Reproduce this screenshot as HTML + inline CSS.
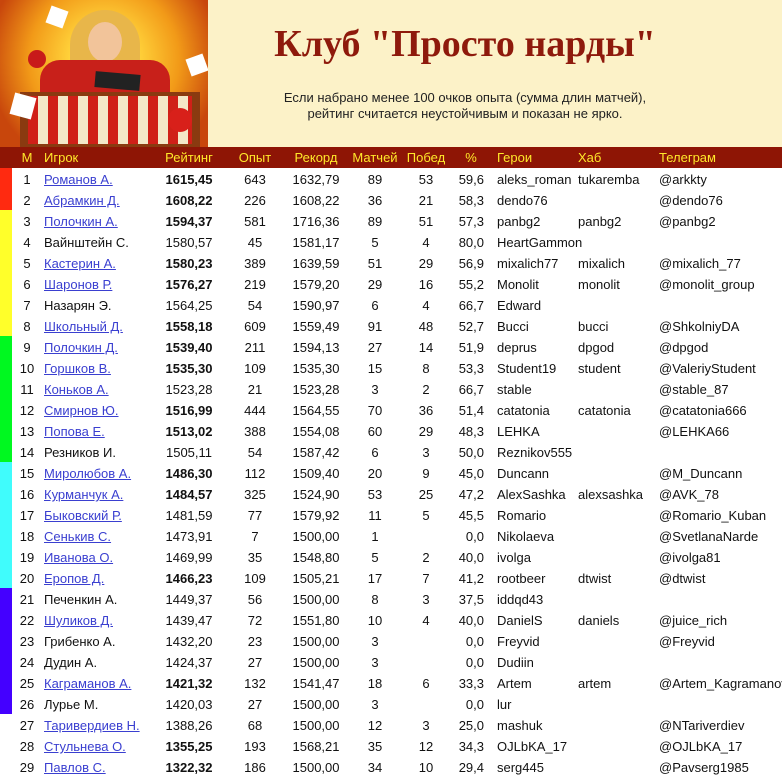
<!DOCTYPE html>
<html><head><meta charset="utf-8"><style>
body{margin:0;width:782px;height:779px;overflow:hidden;background:#fff;font-family:"Liberation Sans",Arial,sans-serif;font-size:13px;color:#111;position:relative}
.top{position:absolute;left:0;top:0;width:782px;height:147px;background:#fcf2c8}
.img{position:absolute;left:0;top:0;width:208px;height:147px;overflow:hidden;background:radial-gradient(circle at 50% 40%,#fff6a0 0,#ffd23a 25%,#f29a18 55%,#c8460c 85%)}
h1{position:absolute;left:220px;width:490px;top:22px;margin:0;text-align:center;font-family:"Liberation Serif",serif;font-weight:bold;font-size:38px;color:#8e1a0c}
.sub{position:absolute;left:220px;width:490px;top:90px;text-align:center;font-size:13px;line-height:16px;color:#222}
.hdr{position:absolute;left:0;top:147px;width:782px;height:21px;background:#8e1505;color:#ffe82a}
.r{position:absolute;left:0;width:782px;height:21px;line-height:21px}
.hdr span,.r span{position:absolute;line-height:21px;white-space:nowrap}
.r span{top:1px}
.hdr span{line-height:22px}
.m{left:7px;width:40px;text-align:center}
.n{left:44px}
.rt{left:139px;width:100px;text-align:center}
.o{left:225px;width:60px;text-align:center}
.rc{left:276px;width:80px;text-align:center}
.mt{left:345px;width:60px;text-align:center}
.w{left:401px;width:50px;text-align:center}
.p{left:440px;width:44px;text-align:right}
.hdr .p{left:451px;width:40px;text-align:center}
.h{left:497px}.x{left:578px}.t{left:659px}
a{color:#3a3fd0;text-decoration:underline}
b{font-weight:bold}
.s{position:absolute;left:0;width:12px}
</style></head><body>
<div class="top"></div>
<div class="img">
<div style="position:absolute;left:70px;top:10px;width:70px;height:80px;border-radius:40px 40px 20px 20px;background:#e8b64a"></div>
<div style="position:absolute;left:88px;top:22px;width:34px;height:40px;border-radius:50%;background:#f2c49a"></div>
<div style="position:absolute;left:40px;top:60px;width:130px;height:40px;border-radius:20px 20px 0 0;background:#c8201a"></div>
<div style="position:absolute;left:95px;top:73px;width:45px;height:16px;background:#222;transform:rotate(5deg)"></div>
<div style="position:absolute;left:20px;top:92px;width:180px;height:55px;background:#8a3a10"></div>
<div style="position:absolute;left:28px;top:96px;width:164px;height:48px;background:repeating-linear-gradient(90deg,#d02018 0 10px,#f4e8c8 10px 20px)"></div>
<div style="position:absolute;left:12px;top:95px;width:22px;height:22px;background:#fff;transform:rotate(15deg)"></div>
<div style="position:absolute;left:48px;top:8px;width:18px;height:18px;background:#fff;transform:rotate(20deg)"></div>
<div style="position:absolute;left:188px;top:56px;width:18px;height:18px;background:#fff;transform:rotate(-20deg)"></div>
<div style="position:absolute;left:168px;top:108px;width:24px;height:24px;border-radius:50%;background:#d8201a"></div>
<div style="position:absolute;left:28px;top:50px;width:18px;height:18px;border-radius:50%;background:#c81a1a"></div>
</div>
<h1>Клуб "Просто нарды"</h1>
<div class="sub">Если набрано менее 100 очков опыта (сумма длин матчей),<br>рейтинг считается неустойчивым и показан не ярко.</div>
<div class="hdr"><span class="m">М</span><span class="n">Игрок</span><span class="rt">Рейтинг</span><span class="o">Опыт</span><span class="rc">Рекорд</span><span class="mt">Матчей</span><span class="w">Побед</span><span class="p">%</span><span class="h">Герои</span><span class="x">Хаб</span><span class="t">Телеграм</span></div>
<div class="s" style="top:168px;height:42px;background:#ff2a10"></div>
<div class="s" style="top:210px;height:126px;background:#ffff2a"></div>
<div class="s" style="top:336px;height:126px;background:#00f820"></div>
<div class="s" style="top:462px;height:126px;background:#40fcfc"></div>
<div class="s" style="top:588px;height:126px;background:#4400ff"></div>

<div class="r" style="top:168px"><span class="m">1</span><span class="n"><a>Романов А.</a></span><span class="rt"><b>1615,45</b></span><span class="o">643</span><span class="rc">1632,79</span><span class="mt">89</span><span class="w">53</span><span class="p">59,6</span><span class="h">aleks_roman</span><span class="x">tukaremba</span><span class="t">@arkkty</span></div>
<div class="r" style="top:189px"><span class="m">2</span><span class="n"><a>Абрамкин Д.</a></span><span class="rt"><b>1608,22</b></span><span class="o">226</span><span class="rc">1608,22</span><span class="mt">36</span><span class="w">21</span><span class="p">58,3</span><span class="h">dendo76</span><span class="t">@dendo76</span></div>
<div class="r" style="top:210px"><span class="m">3</span><span class="n"><a>Полочкин А.</a></span><span class="rt"><b>1594,37</b></span><span class="o">581</span><span class="rc">1716,36</span><span class="mt">89</span><span class="w">51</span><span class="p">57,3</span><span class="h">panbg2</span><span class="x">panbg2</span><span class="t">@panbg2</span></div>
<div class="r" style="top:231px"><span class="m">4</span><span class="n">Вайнштейн С.</span><span class="rt">1580,57</span><span class="o">45</span><span class="rc">1581,17</span><span class="mt">5</span><span class="w">4</span><span class="p">80,0</span><span class="h">HeartGammon</span></div>
<div class="r" style="top:252px"><span class="m">5</span><span class="n"><a>Кастерин А.</a></span><span class="rt"><b>1580,23</b></span><span class="o">389</span><span class="rc">1639,59</span><span class="mt">51</span><span class="w">29</span><span class="p">56,9</span><span class="h">mixalich77</span><span class="x">mixalich</span><span class="t">@mixalich_77</span></div>
<div class="r" style="top:273px"><span class="m">6</span><span class="n"><a>Шаронов Р.</a></span><span class="rt"><b>1576,27</b></span><span class="o">219</span><span class="rc">1579,20</span><span class="mt">29</span><span class="w">16</span><span class="p">55,2</span><span class="h">Monolit</span><span class="x">monolit</span><span class="t">@monolit_group</span></div>
<div class="r" style="top:294px"><span class="m">7</span><span class="n">Назарян Э.</span><span class="rt">1564,25</span><span class="o">54</span><span class="rc">1590,97</span><span class="mt">6</span><span class="w">4</span><span class="p">66,7</span><span class="h">Edward</span></div>
<div class="r" style="top:315px"><span class="m">8</span><span class="n"><a>Школьный Д.</a></span><span class="rt"><b>1558,18</b></span><span class="o">609</span><span class="rc">1559,49</span><span class="mt">91</span><span class="w">48</span><span class="p">52,7</span><span class="h">Bucci</span><span class="x">bucci</span><span class="t">@ShkolniyDA</span></div>
<div class="r" style="top:336px"><span class="m">9</span><span class="n"><a>Полочкин Д.</a></span><span class="rt"><b>1539,40</b></span><span class="o">211</span><span class="rc">1594,13</span><span class="mt">27</span><span class="w">14</span><span class="p">51,9</span><span class="h">deprus</span><span class="x">dpgod</span><span class="t">@dpgod</span></div>
<div class="r" style="top:357px"><span class="m">10</span><span class="n"><a>Горшков В.</a></span><span class="rt"><b>1535,30</b></span><span class="o">109</span><span class="rc">1535,30</span><span class="mt">15</span><span class="w">8</span><span class="p">53,3</span><span class="h">Student19</span><span class="x">student</span><span class="t">@ValeriyStudent</span></div>
<div class="r" style="top:378px"><span class="m">11</span><span class="n"><a>Коньков А.</a></span><span class="rt">1523,28</span><span class="o">21</span><span class="rc">1523,28</span><span class="mt">3</span><span class="w">2</span><span class="p">66,7</span><span class="h">stable</span><span class="t">@stable_87</span></div>
<div class="r" style="top:399px"><span class="m">12</span><span class="n"><a>Смирнов Ю.</a></span><span class="rt"><b>1516,99</b></span><span class="o">444</span><span class="rc">1564,55</span><span class="mt">70</span><span class="w">36</span><span class="p">51,4</span><span class="h">catatonia</span><span class="x">catatonia</span><span class="t">@catatonia666</span></div>
<div class="r" style="top:420px"><span class="m">13</span><span class="n"><a>Попова Е.</a></span><span class="rt"><b>1513,02</b></span><span class="o">388</span><span class="rc">1554,08</span><span class="mt">60</span><span class="w">29</span><span class="p">48,3</span><span class="h">LEHKA</span><span class="t">@LEHKA66</span></div>
<div class="r" style="top:441px"><span class="m">14</span><span class="n">Резников И.</span><span class="rt">1505,11</span><span class="o">54</span><span class="rc">1587,42</span><span class="mt">6</span><span class="w">3</span><span class="p">50,0</span><span class="h">Reznikov555</span></div>
<div class="r" style="top:462px"><span class="m">15</span><span class="n"><a>Миролюбов А.</a></span><span class="rt"><b>1486,30</b></span><span class="o">112</span><span class="rc">1509,40</span><span class="mt">20</span><span class="w">9</span><span class="p">45,0</span><span class="h">Duncann</span><span class="t">@M_Duncann</span></div>
<div class="r" style="top:483px"><span class="m">16</span><span class="n"><a>Курманчук А.</a></span><span class="rt"><b>1484,57</b></span><span class="o">325</span><span class="rc">1524,90</span><span class="mt">53</span><span class="w">25</span><span class="p">47,2</span><span class="h">AlexSashka</span><span class="x">alexsashka</span><span class="t">@AVK_78</span></div>
<div class="r" style="top:504px"><span class="m">17</span><span class="n"><a>Быковский Р.</a></span><span class="rt">1481,59</span><span class="o">77</span><span class="rc">1579,92</span><span class="mt">11</span><span class="w">5</span><span class="p">45,5</span><span class="h">Romario</span><span class="t">@Romario_Kuban</span></div>
<div class="r" style="top:525px"><span class="m">18</span><span class="n"><a>Сенькив С.</a></span><span class="rt">1473,91</span><span class="o">7</span><span class="rc">1500,00</span><span class="mt">1</span><span class="p">0,0</span><span class="h">Nikolaeva</span><span class="t">@SvetlanaNarde</span></div>
<div class="r" style="top:546px"><span class="m">19</span><span class="n"><a>Иванова О.</a></span><span class="rt">1469,99</span><span class="o">35</span><span class="rc">1548,80</span><span class="mt">5</span><span class="w">2</span><span class="p">40,0</span><span class="h">ivolga</span><span class="t">@ivolga81</span></div>
<div class="r" style="top:567px"><span class="m">20</span><span class="n"><a>Еропов Д.</a></span><span class="rt"><b>1466,23</b></span><span class="o">109</span><span class="rc">1505,21</span><span class="mt">17</span><span class="w">7</span><span class="p">41,2</span><span class="h">rootbeer</span><span class="x">dtwist</span><span class="t">@dtwist</span></div>
<div class="r" style="top:588px"><span class="m">21</span><span class="n">Печенкин А.</span><span class="rt">1449,37</span><span class="o">56</span><span class="rc">1500,00</span><span class="mt">8</span><span class="w">3</span><span class="p">37,5</span><span class="h">iddqd43</span></div>
<div class="r" style="top:609px"><span class="m">22</span><span class="n"><a>Шуликов Д.</a></span><span class="rt">1439,47</span><span class="o">72</span><span class="rc">1551,80</span><span class="mt">10</span><span class="w">4</span><span class="p">40,0</span><span class="h">DanielS</span><span class="x">daniels</span><span class="t">@juice_rich</span></div>
<div class="r" style="top:630px"><span class="m">23</span><span class="n">Грибенко А.</span><span class="rt">1432,20</span><span class="o">23</span><span class="rc">1500,00</span><span class="mt">3</span><span class="p">0,0</span><span class="h">Freyvid</span><span class="t">@Freyvid</span></div>
<div class="r" style="top:651px"><span class="m">24</span><span class="n">Дудин А.</span><span class="rt">1424,37</span><span class="o">27</span><span class="rc">1500,00</span><span class="mt">3</span><span class="p">0,0</span><span class="h">Dudiin</span></div>
<div class="r" style="top:672px"><span class="m">25</span><span class="n"><a>Каграманов А.</a></span><span class="rt"><b>1421,32</b></span><span class="o">132</span><span class="rc">1541,47</span><span class="mt">18</span><span class="w">6</span><span class="p">33,3</span><span class="h">Artem</span><span class="x">artem</span><span class="t">@Artem_Kagramanov</span></div>
<div class="r" style="top:693px"><span class="m">26</span><span class="n">Лурье М.</span><span class="rt">1420,03</span><span class="o">27</span><span class="rc">1500,00</span><span class="mt">3</span><span class="p">0,0</span><span class="h">lur</span></div>
<div class="r" style="top:714px"><span class="m">27</span><span class="n"><a>Таривердиев Н.</a></span><span class="rt">1388,26</span><span class="o">68</span><span class="rc">1500,00</span><span class="mt">12</span><span class="w">3</span><span class="p">25,0</span><span class="h">mashuk</span><span class="t">@NTariverdiev</span></div>
<div class="r" style="top:735px"><span class="m">28</span><span class="n"><a>Стульнева О.</a></span><span class="rt"><b>1355,25</b></span><span class="o">193</span><span class="rc">1568,21</span><span class="mt">35</span><span class="w">12</span><span class="p">34,3</span><span class="h">OJLbKA_17</span><span class="t">@OJLbKA_17</span></div>
<div class="r" style="top:756px"><span class="m">29</span><span class="n"><a>Павлов С.</a></span><span class="rt"><b>1322,32</b></span><span class="o">186</span><span class="rc">1500,00</span><span class="mt">34</span><span class="w">10</span><span class="p">29,4</span><span class="h">serg445</span><span class="t">@Pavserg1985</span></div>
</body></html>
